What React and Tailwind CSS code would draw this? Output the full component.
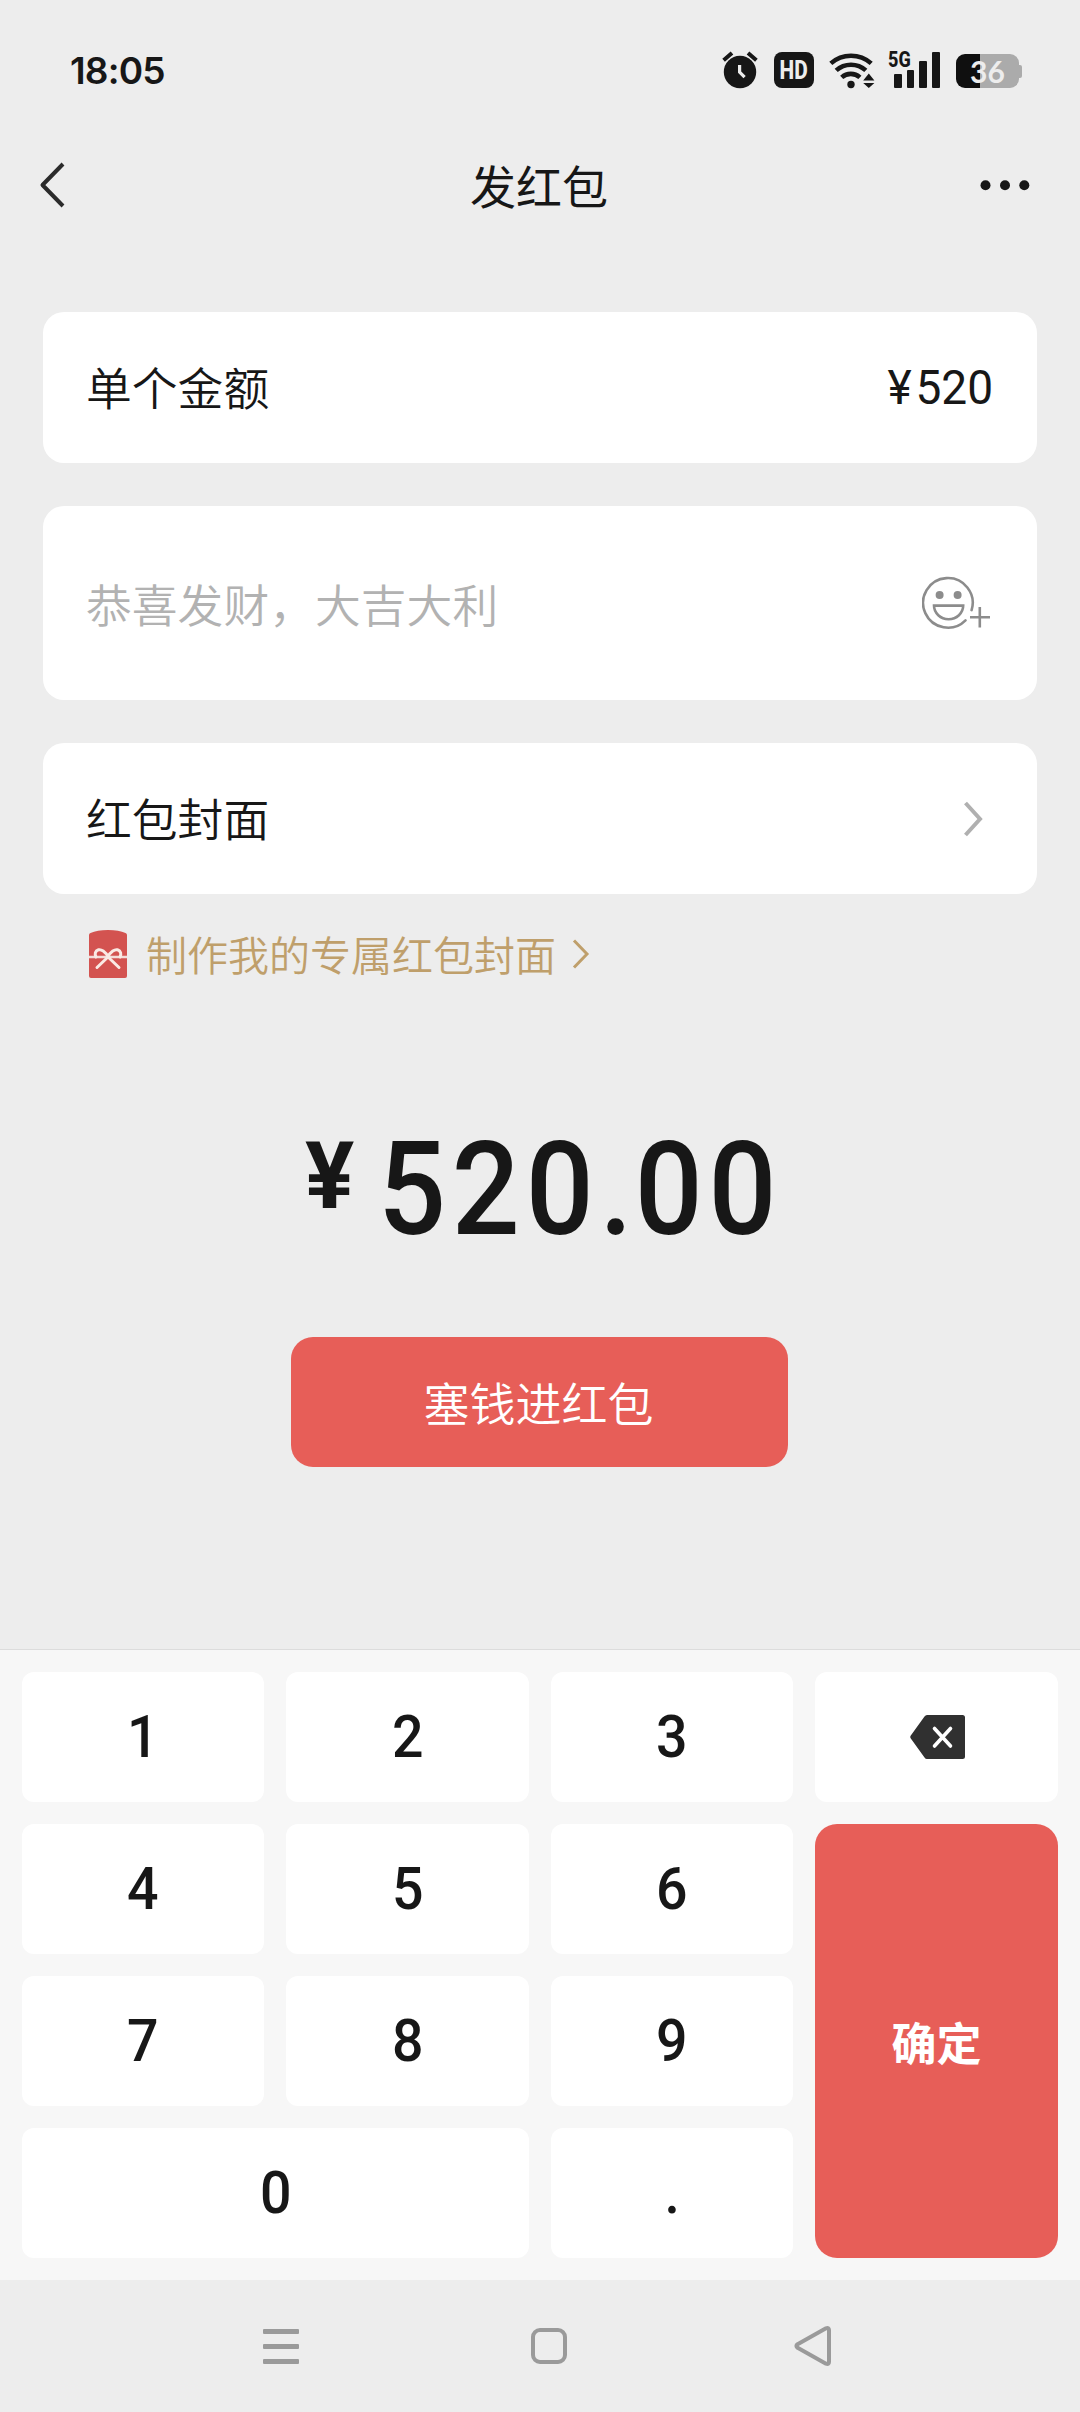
const CJK = "font-['Noto_Sans_CJK_SC',sans-serif]";
const NUM = "font-['Roboto',sans-serif]";

function AlarmIcon() {
  return (
    <svg width="36" height="38" viewBox="0 0 36 38" fill="none">
      <circle cx="18" cy="21" r="16.2" fill="#171717" />
      <path d="M1.6 9.2 10 2M34.4 9.2 26 2" stroke="#171717" strokeWidth="4" />
      <path d="M17.6 14v7.2l5 5" stroke="#ededed" strokeWidth="3.2" />
    </svg>
  );
}

function HdIcon() {
  return (
    <div className="flex h-9 w-10 items-center justify-center rounded-lg bg-[#171717] font-['Roboto',sans-serif] text-[26px] leading-none font-extrabold text-[#ededed]">
      <span className="inline-block scale-x-80">HD</span>
    </div>
  );
}

function WifiIcon() {
  return (
    <svg width="46" height="38" viewBox="0 0 46 38" fill="none">
      <g stroke="#171717" strokeWidth="4.6">
        <path d="M1.8 12.4a30.5 30.5 0 0 1 40.4 0" />
        <path d="M7.2 19.4a22 22 0 0 1 29.6 0" />
        <path d="M12.7 26.4a13.6 13.6 0 0 1 18.2 0" />
      </g>
      <circle cx="22" cy="33.5" r="3.7" fill="#171717" />
      <path d="M39.8 22.5l5.6 7H34.2zM39.8 37l5.6-5H34.2z" fill="#171717" />
    </svg>
  );
}

function SignalIcon() {
  return (
    <div className="relative flex h-9 w-[52px] items-end gap-[5px] pl-[6px]">
      <span className="absolute -top-[2px] left-0 origin-left scale-x-[.82] font-['Roboto',sans-serif] text-[22px] leading-5 font-extrabold text-[#171717]">
        5G
      </span>
      <i className="h-3.5 w-2 rounded-[1px] bg-[#171717]" />
      <i className="h-[18px] w-[7px] rounded-[1px] bg-[#171717]" />
      <i className="h-[27px] w-2 rounded-[1px] bg-[#171717]" />
      <i className="h-9 w-2 rounded-[1px] bg-[#171717]" />
    </div>
  );
}

function BatteryIcon() {
  return (
    <div className="flex items-center">
      <div className="flex h-[34px] w-[63px] items-center justify-center rounded-[9px] bg-linear-to-r from-[#0f0f0f] from-[38%] to-[#ababab] to-[38%] font-['Lato',sans-serif] text-[30px] leading-none font-bold text-[#ededed]">
        36
      </div>
      <i className="h-[13px] w-[3px] rounded-r-[2px] bg-[#ababab]" />
    </div>
  );
}

function StatusBar() {
  return (
    <div className="flex h-[141px] items-start justify-between pr-[58px] pl-[70px]">
      <div className="mt-[52px] font-['Inter',sans-serif] text-[37px] leading-[37px] font-semibold tracking-[-0.8px] text-[#171717]">
        18:05
      </div>
      <div className="mt-[51px] flex h-[38px] items-center">
        <AlarmIcon />
        <div className="ml-4"><HdIcon /></div>
        <div className="ml-[15px]"><WifiIcon /></div>
        <div className="ml-[13px]"><SignalIcon /></div>
        <div className="mt-[2px] ml-4"><BatteryIcon /></div>
      </div>
    </div>
  );
}

function Header() {
  return (
    <header className="grid h-[88px] grid-cols-[90px_1fr_90px] items-center px-[50px]">
      <svg className="-ml-[11px]" width="28" height="50" viewBox="0 0 28 50" fill="none">
        <path d="M24 4 3.500 25 24 46" stroke="#2b2b2b" strokeWidth="4" strokeLinejoin="round" />
      </svg>
      <h1 className={`${CJK} pr-[2px] pb-[2px] text-center text-[46px] leading-[86px] font-normal text-[#171717]`}>发红包</h1>
      <svg className="justify-self-end" width="50" height="12" viewBox="0 0 50 12" fill="#171717">
        <circle cx="5.500" cy="6.300" r="5" />
        <circle cx="25" cy="6.300" r="5" />
        <circle cx="44.300" cy="6.300" r="5" />
      </svg>
    </header>
  );
}

function EmojiIcon() {
  return (
    <svg width="68" height="54" viewBox="0 0 68 54" fill="none" stroke="#8c8c8c" strokeWidth="2.6">
      <path d="M49.600 34.100A24.800 24.800 0 1 0 43.500 44.300" strokeLinecap="round" />
      <path d="M12 29.600H41.200A14.600 13.600 0 0 1 12 29.600z" />
      <circle cx="17.600" cy="19" r="4" fill="#8c8c8c" stroke="none" />
      <circle cx="35.600" cy="19" r="4" fill="#8c8c8c" stroke="none" />
      <path d="M57.800 31v20.400M48 41.200h20" />
    </svg>
  );
}

function EnvelopeIcon() {
  return (
    <svg width="38" height="48" viewBox="0 0 38 48" fill="none">
      <path d="M0 5Q0 3.600 1.500 3 8 0 19 0T36.500 3Q38 3.600 38 5V46q0 2-2 2H2q-2 0-2-2z" fill="#d35350" />
      <path d="M0 27H38" stroke="#f3dcd8" strokeWidth="2.4" />
      <path
        d="M19 27C16.500 21.500 12 19 9.500 19.800 6 21 5.500 24 7 27M19 27C21.500 21.500 26 19 28.500 19.800 32 21 32.500 24 31 27M19 27 8 37.500M19 27 30 37.500"
        stroke="#faeae4"
        strokeWidth="3"
        strokeLinecap="round"
      />
    </svg>
  );
}

function Form() {
  return (
    <section className={`${CJK} flex flex-col gap-[43px] px-[43px] text-[45.8px] leading-[46px] font-[350] text-[#171717]`}>
      <div className="flex h-[151px] items-center justify-between rounded-[21px] bg-white px-[43px]">
        <span className="pb-[3px]">单个金额</span>
        <span className={`${NUM} mr-px origin-right scale-x-[.96] text-[48px] font-normal`}>
          <span className="mr-[4px]">¥</span>520
        </span>
      </div>
      <div className="flex h-[194px] items-center justify-between rounded-[21px] bg-white pr-[47px] pl-[43px]">
        <span className="text-[#b2b2b2]">恭喜发财，大吉大利</span>
        <EmojiIcon />
      </div>
      <div className="flex h-[151px] items-center justify-between rounded-[21px] bg-white pr-[54px] pl-[43px]">
        <span className="pb-[3px]">红包封面</span>
        <svg width="19" height="36" viewBox="0 0 19 36" fill="none">
          <path d="M1.500 2 16 18 1.500 34" stroke="#b0b0b0" strokeWidth="4" />
        </svg>
      </div>
    </section>
  );
}

function CoverLink() {
  return (
    <div className={`${CJK} mt-9 flex h-12 items-center pl-[89px] text-[41px] leading-none font-[350] text-[#bf9f6b]`}>
      <EnvelopeIcon />
      <span className="ml-[19px] pb-px">制作我的专属红包封面</span>
      <svg className="ml-[16px]" width="18" height="30" viewBox="0 0 18 30" fill="none">
        <path d="M2 1.500 15 15 2 28.500" stroke="#bf9f6b" strokeWidth="3" />
      </svg>
    </div>
  );
}

function Amount() {
  return (
    <div className={`${NUM} mt-[147px] flex h-[130px] items-start pl-[305px] font-medium text-[#171717]`}>
      <span className="mt-[6px] mr-[24px] text-[92px] leading-none font-bold">¥</span>
      <span className="origin-left scale-x-92 text-[130px] leading-none tracking-[6.4px]">
        520<span className="tracking-[2px]">.</span>00
      </span>
    </div>
  );
}

function Key({ children, className = "" }) {
  return (
    <button className={`flex items-center justify-center rounded-xl bg-white ${className}`}>
      <span className="inline-block scale-x-94 pb-px">{children}</span>
    </button>
  );
}

function Keypad() {
  return (
    <section className={`${NUM} grid h-[631px] grid-cols-[242px_243px_242px_243px] grid-rows-4 gap-[22px] border-t border-[#dcdcdc] bg-[#f7f7f7] p-[22px] text-[59px] leading-none font-medium text-[#171717]`}>
      <Key>1</Key>
      <Key>2</Key>
      <Key>3</Key>
      <button className="flex items-center justify-center rounded-xl bg-white pl-px">
        <svg width="55" height="44" viewBox="0 0 55 44" fill="none">
          <path d="M17 0H52.500Q55 0 55 2.500V41.500Q55 44 52.500 44H17Q15.500 44 14.500 42.500L.8 23.500Q-.3 22 .8 20.500L14.500 1.500Q15.500 0 17 0z" fill="#303030" />
          <path d="M24.500 13.500 40.500 31M40.500 13.500 24.500 31" stroke="#fff" strokeWidth="3.600" strokeLinecap="round" />
        </svg>
      </button>
      <Key>4</Key>
      <Key>5</Key>
      <Key>6</Key>
      <button className={`${CJK} row-span-3 flex items-center justify-center rounded-[22px] bg-[#e75e58] text-[45px] leading-none font-bold text-white`}>
        确定
      </button>
      <Key>7</Key>
      <Key>8</Key>
      <Key>9</Key>
      <Key className="col-span-2">0</Key>
      <Key>.</Key>
    </section>
  );
}

function NavBar() {
  return (
    <nav className="flex h-[132px] items-center pl-[263px]">
      <div className="flex w-9 flex-col gap-[10px]">
        <i className="h-[5px] rounded-[1px] bg-[#9a9a9a]" />
        <i className="h-[5px] rounded-[1px] bg-[#9a9a9a]" />
        <i className="h-[5px] rounded-[1px] bg-[#9a9a9a]" />
      </div>
      <i className="ml-[232px] size-9 rounded-[9px] border-4 border-[#9a9a9a]" />
      <svg className="ml-[227px]" width="38" height="42" viewBox="0 0 38 42" fill="none">
        <path d="M32 3.300 3.600 19.200Q1.200 21 3.600 22.800L32 38.700Q35 39.800 35 37V5Q35 2.200 32 3.300z" stroke="#9a9a9a" strokeWidth="4" strokeLinejoin="round" />
      </svg>
    </nav>
  );
}

export default function App() {
  return (
    <div className="flex h-[2412px] w-[1080px] flex-col overflow-hidden bg-[#ededed]">
      <StatusBar />
      <Header />
      <main className="flex flex-1 flex-col pt-[83px]">
        <Form />
        <CoverLink />
        <Amount />
        <button className={`${CJK} mt-[82px] mr-px h-[130px] w-[497px] self-center rounded-[22px] bg-[#e75e58] pr-[2px] pb-[3px] text-[46px] leading-none font-[350] text-white`}>
          塞钱进红包
        </button>
      </main>
      <Keypad />
      <NavBar />
    </div>
  );
}
